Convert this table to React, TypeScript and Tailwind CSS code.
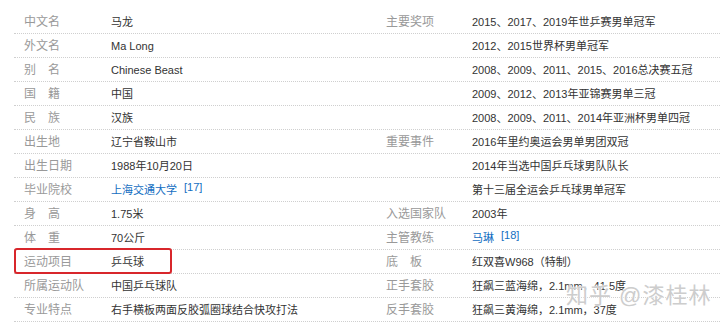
import React from 'react';

type Cell = { label: string; value: React.ReactNode };

const Ref = ({ n }: { n: number }) => (
  <sup className="ml-[7px] relative top-[-3px] text-[11px] text-[#136ec2]">[{n}]</sup>
);

const Link = ({ children }: { children: React.ReactNode }) => (
  <span className="text-[#136ec2]">{children}</span>
);

const rows: [Cell, Cell][] = [
  [{ label: '中文名', value: '马龙' }, { label: '主要奖项', value: '2015、2017、2019年世乒赛男单冠军' }],
  [{ label: '外文名', value: 'Ma Long' }, { label: '', value: '2012、2015世界杯男单冠军' }],
  [{ label: '别\u3000名', value: 'Chinese Beast' }, { label: '', value: '2008、2009、2011、2015、2016总决赛五冠' }],
  [{ label: '国\u3000籍', value: '中国' }, { label: '', value: '2009、2012、2013年亚锦赛男单三冠' }],
  [{ label: '民\u3000族', value: '汉族' }, { label: '', value: '2008、2009、2011、2014年亚洲杯男单四冠' }],
  [{ label: '出生地', value: '辽宁省鞍山市' }, { label: '重要事件', value: '2016年里约奥运会男单男团双冠' }],
  [{ label: '出生日期', value: '1988年10月20日' }, { label: '', value: '2014年当选中国乒乓球男队队长' }],
  [
    { label: '毕业院校', value: <><Link>上海交通大学</Link><Ref n={17} /></> },
    { label: '', value: '第十三届全运会乒乓球男单冠军' },
  ],
  [{ label: '身\u3000高', value: '1.75米' }, { label: '入选国家队', value: '2003年' }],
  [
    { label: '体\u3000重', value: '70公斤' },
    { label: '主管教练', value: <><Link>马琳</Link><Ref n={18} /></> },
  ],
  [{ label: '运动项目', value: '乒乓球' }, { label: '底\u3000板', value: '红双喜W968（特制）' }],
  [{ label: '所属运动队', value: '中国乒乓球队' }, { label: '正手套胶', value: '狂飙三蓝海绵，2.1mm，41.5度' }],
  [{ label: '专业特点', value: '右手横板两面反胶弧圈球结合快攻打法' }, { label: '反手套胶', value: '狂飙三黄海绵，2.1mm，37度' }],
];

export default function App() {
  return (
    <div
      className="relative w-[720px] h-[331px] overflow-hidden bg-white pl-[14px] pt-[10px]"
      style={{ fontFamily: '"Liberation Sans", Arial, "Noto Sans CJK SC", sans-serif' }}
    >
      {rows.map(([l, r], i) => (
        <div key={i} className="flex h-[24px] leading-[24px] border-b border-dotted border-[#cfcfcf] whitespace-nowrap">
          <div className="flex w-[362px]">
            <div className="w-[97px] pl-[10px] text-[12px] text-[#999]">{l.label}</div>
            <div className="text-[11px] text-[#333]">{l.value}</div>
          </div>
          <div className="flex">
            <div className="w-[96px] pl-[10px] text-[12px] text-[#999]">{r.label}</div>
            <div className="text-[11px] text-[#333]">{r.value}</div>
          </div>
        </div>
      ))}

      {/* highlight box */}
      <div className="absolute left-[14px] top-[248px] w-[158px] h-[26px] border-2 border-[#d8262b] rounded-[3px]" />

      {/* watermark */}
      <div
        className="absolute left-[566px] top-[283px] text-[22px] leading-[26px] text-[#cdcdcd] tracking-[1px]"
        style={{ textShadow: '0 0 2px #fff, 0 0 2px #fff' }}
      >
        知乎 @漆桂林
      </div>
    </div>
  );
}
